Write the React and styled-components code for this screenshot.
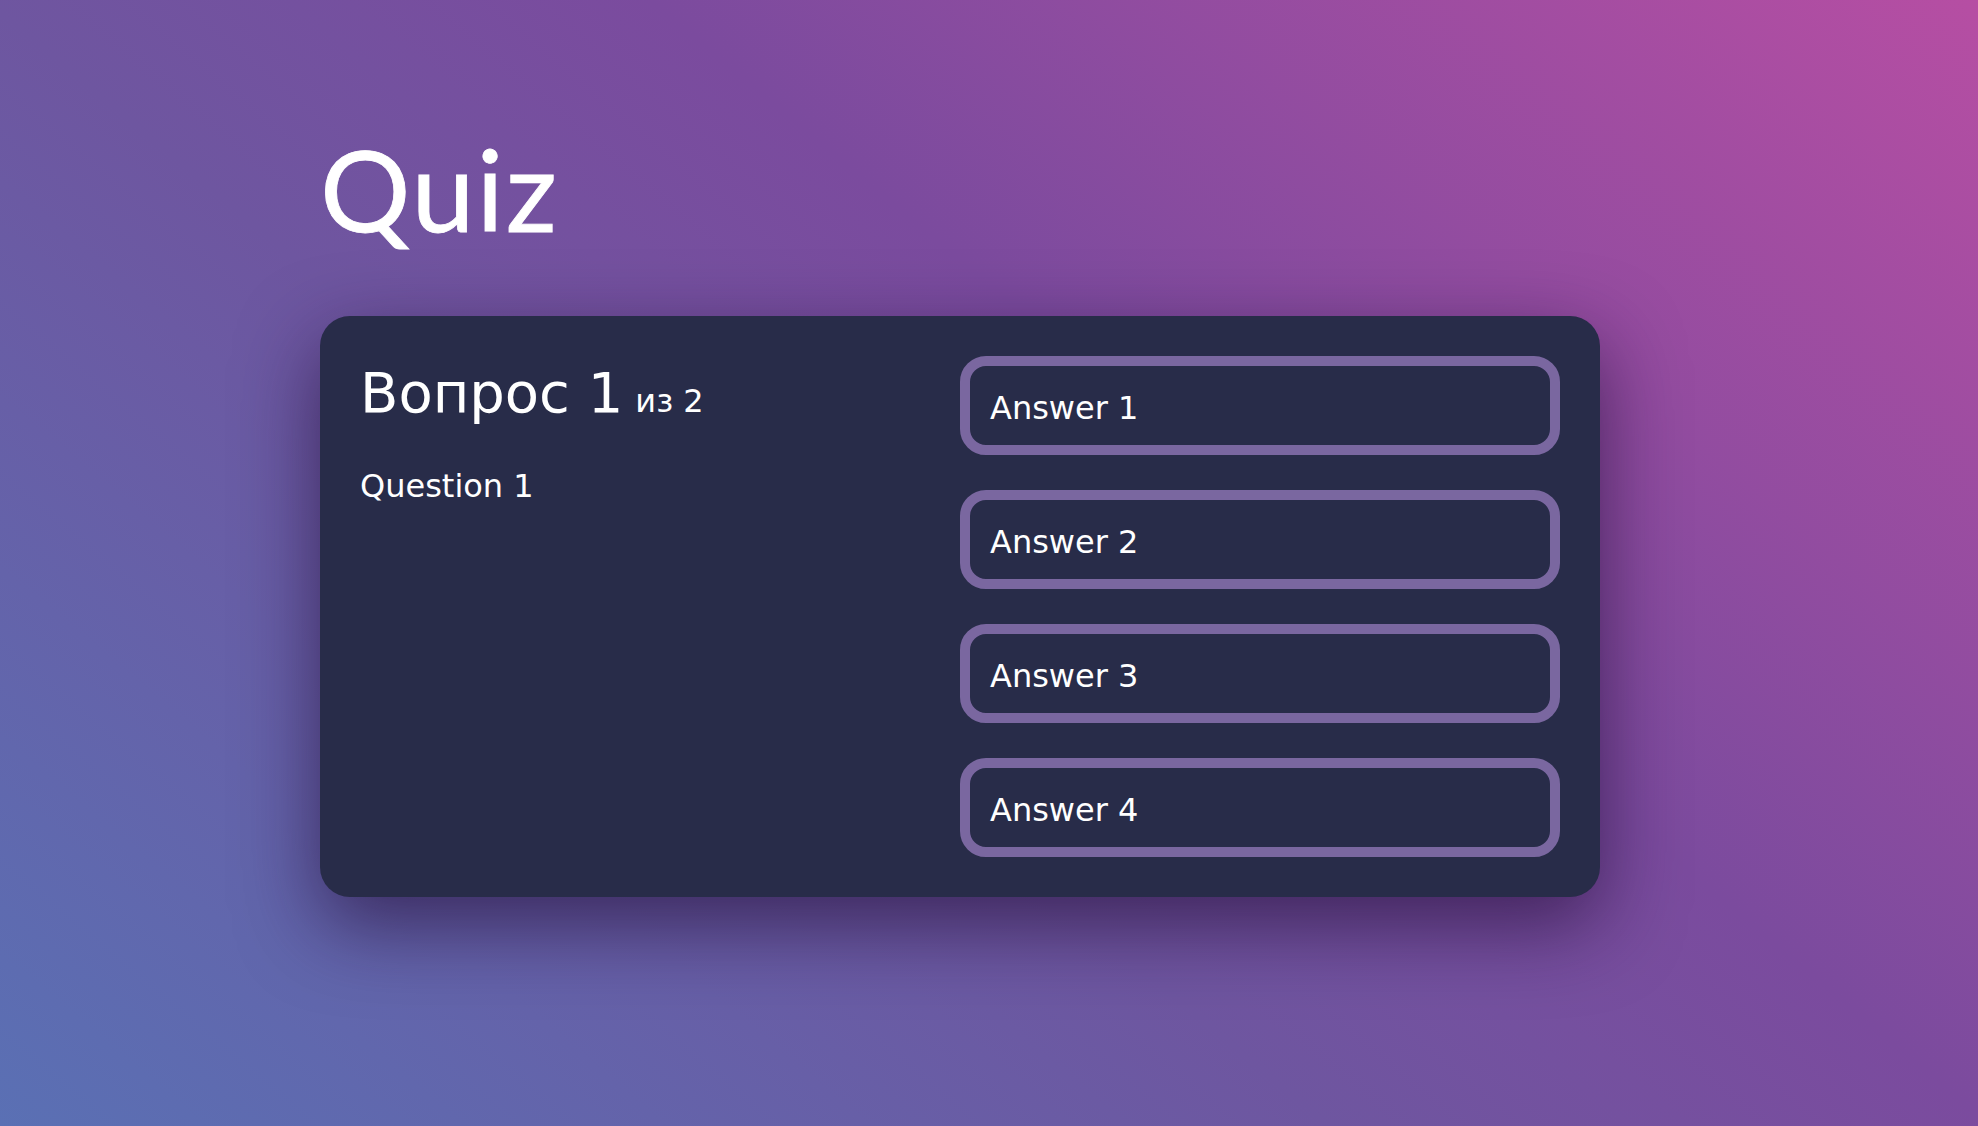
import * as React from 'react';
import styled, { createGlobalStyle } from 'styled-components';

const GlobalStyle = createGlobalStyle`
	html, body {
		margin: 0;
		padding: 0;
	}

	body {
		min-height: 100vh;
		background: linear-gradient(40deg, #5a70b4 0%, #6e56a0 40%, #7b4b9e 60%, #b64ea3 100%);
		background-attachment: fixed;
		font-family: 'DejaVu Sans', Verdana, sans-serif;
		color: #fff;
	}
`;

const Page = styled.div`
	min-height: 100vh;
	box-sizing: border-box;
	padding: 121px 0 0 320px;
`;

const Main = styled.main`
	width: 1280px;
`;

const Title = styled.h1`
	margin: 0 0 59px;
	font-family: Lato, 'Open Sans', sans-serif;
	font-weight: 400;
	font-size: 113px;
	letter-spacing: 2px;
	line-height: 1.2;
	-webkit-text-stroke: 0.8px #fff;
`;

const Card = styled.section`
	display: grid;
	grid-template-columns: 1fr 1fr;
	padding: 40px;
	border-radius: 30px;
	background: #282c49;
	box-shadow: 0 28px 80px rgba(35, 12, 55, 0.65);
`;

const QuestionSide = styled.div`
	padding-top: 4px;
`;

const Heading = styled.h2`
	margin: 0;
	font-size: 56px;
	font-weight: 400;
	line-height: 65px;
`;

const Counter = styled.small`
	font-size: 32px;
	margin-left: 12px;
`;

const QuestionText = styled.p`
	margin: 33px 0 0;
	font-size: 32px;
`;

const Answers = styled.ul`
	display: flex;
	flex-direction: column;
	gap: 35px;
	margin: 0;
	padding: 0;
	list-style: none;
`;

const Answer = styled.li`
	display: flex;
	align-items: center;
	box-sizing: border-box;
	height: 99px;
	padding: 5px 20px 0;
	border: 10px solid #7a67a0;
	border-radius: 26px;
	font-size: 32px;
	cursor: pointer;
`;

const answers = ['Answer 1', 'Answer 2', 'Answer 3', 'Answer 4'];

const App = () => {
	return (
		<>
			<GlobalStyle />
			<Page>
				<Main>
					<Title>Quiz</Title>
					<Card>
						<QuestionSide>
							<Heading>Вопрос 1<Counter>из 2</Counter></Heading>
							<QuestionText>Question 1</QuestionText>
						</QuestionSide>
						<Answers>
							{answers.map((answer, i) => (
								<Answer key={i}>{answer}</Answer>
							))}
						</Answers>
					</Card>
				</Main>
			</Page>
		</>
	);
};

export default App;
